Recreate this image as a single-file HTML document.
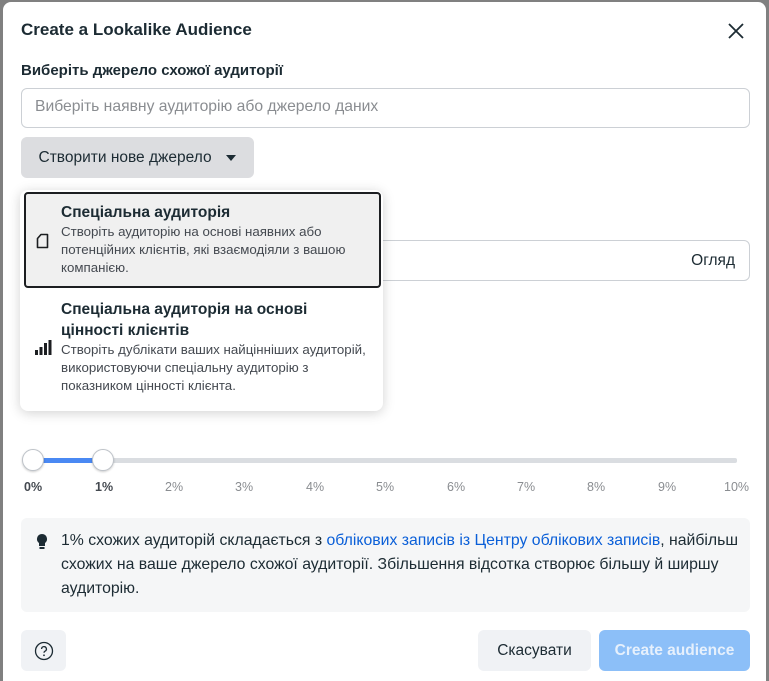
<!DOCTYPE html>
<html><head><meta charset="utf-8"><style>
*{box-sizing:border-box;margin:0;padding:0}
body{width:769px;height:681px;background:#808080;font-family:"Liberation Sans",Arial,sans-serif;color:#1c2b33;position:relative;overflow:hidden}
.modal{position:absolute;left:3px;top:2px;width:763px;height:679px;background:#fff;border-radius:8px 8px 0 0}
.a{position:absolute}
.title{left:21px;top:20px;font-size:17px;font-weight:bold;color:#1c2b33}
.lbl{left:21px;top:62px;font-size:15px;font-weight:bold}
.inp{border:1px solid #ccd0d5;border-radius:6px;background:#fff}
.ph{color:#8a8d91;font-size:15.7px}
.btn{background:#e4e6eb;border-radius:6px;font-size:15.5px;display:flex;align-items:center;justify-content:center}
.dd{left:20px;top:190px;width:363px;height:221px;background:#fff;border-radius:8px;box-shadow:0 2px 12px rgba(0,0,0,.18)}
.it h4{font-size:15.5px;font-weight:bold;color:#1c2b33;line-height:20px}
.it p{font-size:13.3px;color:#444950;line-height:18px}
.tk{font-size:12.5px;color:#8a8d91;top:480px}
.thumb{width:22px;height:22px;border-radius:50%;background:#fff;border:1px solid #bec3c9;box-shadow:0 1px 2px rgba(0,0,0,.2);top:449px}
</style></head><body>
<div class="modal"></div>
<div class="a title">Create a Lookalike Audience</div>
<svg class="a" style="left:727px;top:22px" width="18" height="18" viewBox="0 0 18 18"><path d="M2 2L16 16M16 2L2 16" stroke="#1c2b33" stroke-width="1.8"/></svg>
<div class="a lbl">Виберіть джерело схожої аудиторії</div>
<div class="a inp" style="left:21px;top:88px;width:729px;height:40px"><span class="a ph" style="left:13px;top:9px">Виберіть наявну аудиторію або джерело даних</span></div>
<div class="a btn" style="left:21px;top:137px;width:233px;height:41px;background:#dcdde0">Створити нове джерело&nbsp;&nbsp;&nbsp;<svg width="12" height="8" viewBox="0 0 12 8"><path d="M1 1h10L6 7z" fill="#1c2b33"/></svg></div>
<div class="a inp" style="left:370px;top:240px;width:380px;height:41px"><span class="a" style="right:14px;top:11px;font-size:15.5px">Огляд</span></div>
<div class="a dd">
 <div class="a it" style="left:4px;top:2px;width:357px;height:96px;background:#f0f0f0;border:2px solid #1c1e21;border-radius:4px">
  <svg class="a" style="left:10px;top:39px" width="14" height="16" viewBox="0 0 14 16"><path d="M5 1.5h6.5v13h-10v-9z" fill="none" stroke="#1c1e21" stroke-width="1.6" stroke-linejoin="round"/></svg>
  <div class="a" style="left:35px;top:9px;width:318px"><h4>Спеціальна аудиторія</h4><p>Створіть аудиторію на основі наявних або потенційних клієнтів, які взаємодіяли з вашою компанією.</p></div>
 </div>
 <div class="a it" style="left:4px;top:108px;width:357px">
  <svg class="a" style="left:10px;top:42px" width="18" height="16" viewBox="0 0 18 16"><rect x="1" y="10" width="3" height="5" fill="#1c1e21"/><rect x="5.5" y="7" width="3" height="8" fill="#1c1e21"/><rect x="10" y="3" width="3" height="12" fill="#1c1e21"/><rect x="14.5" y="0" width="3" height="15" fill="#1c1e21"/></svg>
  <div class="a" style="left:37px;top:1px;width:300px"><h4 style="line-height:21px">Спеціальна аудиторія на основі цінності клієнтів</h4><p style="width:318px">Створіть дублікати ваших найцінніших аудиторій, використовуючи спеціальну аудиторію з показником цінності клієнта.</p></div>
 </div>
</div>
<div class="a" style="left:33px;top:458px;width:704px;height:5px;background:#dadde1;border-radius:2px"></div>
<div class="a" style="left:33px;top:458px;width:70px;height:5px;background:#4a89f3"></div>
<div class="a thumb" style="left:22px"></div>
<div class="a thumb" style="left:92px"></div>
<div class="a tk" style="left:24px;color:#444950;font-weight:bold">0%</div>
<div class="a tk" style="left:95px;color:#444950;font-weight:bold">1%</div>
<div class="a tk" style="left:165px">2%</div>
<div class="a tk" style="left:235px">3%</div>
<div class="a tk" style="left:306px">4%</div>
<div class="a tk" style="left:376px">5%</div>
<div class="a tk" style="left:447px">6%</div>
<div class="a tk" style="left:517px">7%</div>
<div class="a tk" style="left:587px">8%</div>
<div class="a tk" style="left:658px">9%</div>
<div class="a tk" style="left:724px">10%</div>
<div class="a" style="left:21px;top:518px;width:729px;height:94px;background:#f5f6f7;border-radius:6px">
 <svg class="a" style="left:15px;top:15px" width="12" height="18" viewBox="0 0 12 18"><path d="M6 1a5 5 0 0 0-3 9v3h6v-3a5 5 0 0 0-3-9z" fill="#1c2b33"/><rect x="3.5" y="14" width="5" height="2" fill="#1c2b33"/></svg>
 <div class="a" style="left:40px;top:11px;width:690px;font-size:15.8px;line-height:24px;color:#1c2b33">1% схожих аудиторій складається з <span style="color:#0a5fd8">облікових записів із Центру облікових записів</span>, найбільш схожих на ваше джерело схожої аудиторії. Збільшення відсотка створює більшу й ширшу аудиторію.</div>
</div>
<div class="a btn" style="left:21px;top:630px;width:45px;height:41px;background:#f0f2f5"><svg width="20" height="20" viewBox="0 0 20 20"><circle cx="10" cy="10" r="8.5" fill="none" stroke="#1c2b33" stroke-width="1.3"/><path d="M7.6 8a2.4 2.4 0 1 1 3.4 2.2c-.7.4-1 .8-1 1.6" fill="none" stroke="#1c2b33" stroke-width="1.3"/><circle cx="10" cy="14.3" r=".9" fill="#1c2b33"/></svg></div>
<div class="a btn" style="left:478px;top:630px;width:113px;height:41px;background:#f0f2f5">Скасувати</div>
<div class="a btn" style="left:599px;top:630px;width:151px;height:41px;background:#8cbff8;color:#e6f0fc;font-weight:bold">Create audience</div>
</body></html>
